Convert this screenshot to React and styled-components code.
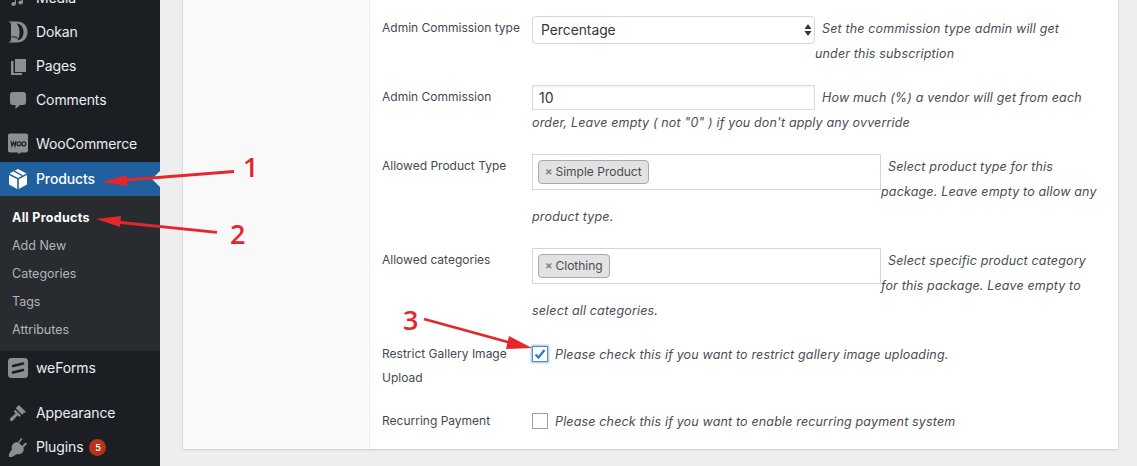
import React from 'react';
import styled, { createGlobalStyle } from 'styled-components';

const Global = createGlobalStyle`
  html, body { margin: 0; padding: 0; height: 466px; overflow: hidden; background: #eeeeee; }
  * { box-sizing: border-box; }
  #root { height: 466px; }
`;

const fontStack = `Inter, "Open Sans", "Liberation Sans", sans-serif`;

const Page = styled.div`
  position: relative;
  display: flex;
  width: 1137px;
  height: 466px;
  overflow: hidden;
  font-family: ${fontStack};
  background: #eeeeee;
`;

const Sidebar = styled.nav`
  flex: 0 0 160px;
  background: #1b1f24;
  height: 466px;
  overflow: hidden;
`;

const SidebarInner = styled.div`
  margin-top: -19px;
`;

const MenuItem = styled.div`
  display: flex;
  align-items: center;
  position: relative;
  height: 34px;
  padding-left: 8px;
  gap: 8px;
  font-size: 14px;
  letter-spacing: -0.12px;
  font-weight: ${p => (p.$active ? 500 : 400)};
  color: ${p => (p.$active ? '#ffffff' : '#eceef0')};
  background: ${p => (p.$active ? '#20609f' : 'transparent')};
  margin-top: ${p => p.$gap || 0}px;
`;

const MenuLabel = styled.span`
  margin-top: -1px;
`;

const IconSlot = styled.span`
  flex: 0 0 20px;
  width: 20px;
  height: 20px;
  display: flex;
  align-items: center;
  justify-content: center;
  color: ${p => (p.$active ? '#ffffff' : '#8b8f94')};
`;

const Notch = styled.span`
  position: absolute;
  right: 0;
  top: 50%;
  margin-top: -8px;
  border: 8px solid transparent;
  border-right-color: #eeeeee;
  border-left-width: 0;
`;

const SubMenu = styled.div`
  background: #282c30;
  padding: 7px 0 8px;
`;

const SubItem = styled.div`
  height: 28px;
  padding-left: 12px;
  display: flex;
  align-items: center;
  font-size: 12.5px;
  letter-spacing: ${p => (p.$active ? '0.3px' : '0')};
  font-weight: ${p => (p.$active ? 700 : 400)};
  color: ${p => (p.$active ? '#ffffff' : '#b3b5b8')};
`;

const Badge = styled.span`
  display: inline-flex;
  align-items: center;
  justify-content: center;
  width: 17px;
  height: 17px;
  border-radius: 50%;
  background: #b9321c;
  color: #fff;
  font-size: 9px;
  font-weight: 600;
  margin-left: -2px;
`;

const Main = styled.main`
  flex: 1;
  height: 466px;
  padding: 0 19px 17px 23px;
  display: flex;
  flex-direction: column;
  justify-content: flex-end;
`;

const Card = styled.section`
  display: flex;
  height: 480px;
  background: #ffffff;
  box-shadow: 0 1px 2px rgba(0, 0, 0, 0.12), 0 0 1px rgba(0, 0, 0, 0.18);
`;

const SideCol = styled.div`
  flex: 0 0 187px;
  background: #f9f9f9;
  border-right: 1px solid #eeeeee;
`;

const Form = styled.div`
  flex: 1;
  padding: 30px 12px 0;
  display: flex;
  flex-direction: column;
  justify-content: flex-end;
`;

const Row = styled.div`
  display: grid;
  grid-template-columns: 150px 1fr;
  height: ${p => p.$h}px;
`;

const Label = styled.div`
  font-size: 12px;
  line-height: 24px;
  color: #444a50;
`;

const Field = styled.div`
  font-size: 13px;
  line-height: 25px;
  color: #4a4d52;
  width: 566px;
`;

const Help = styled.span`
  font-style: italic;
  font-size: 12.5px;
  letter-spacing: 0.16px;
  margin-left: 7px;
`;

const SelectWrap = styled.span`
  position: relative;
  float: left;
  width: 283px;
  height: 28px;
`;

const Select = styled.select`
  appearance: none;
  display: block;
  width: 100%;
  height: 28px;
  padding: 0 8px;
  border: 1px solid #d6d6d6;
  border-radius: 4px;
  background: #fff;
  color: #33363a;
  font: 13.8px ${fontStack};
`;

const SelectArrows = styled.svg`
  position: absolute;
  right: 2px;
  top: 7px;
  pointer-events: none;
`;

const TextInput = styled.input`
  float: left;
  width: 283px;
  height: 25px;
  padding: 0 6px;
  border: 1px solid #dcdcdc;
  box-shadow: inset 0 1px 2px rgba(0, 0, 0, 0.07);
  background: #fff;
  color: #33363a;
  font: 14px ${fontStack};
`;

const TagBox = styled.span`
  float: left;
  display: flex;
  align-items: center;
  width: 349px;
  height: 36px;
  padding-left: 5px;
  border: 1px solid #d6d6d6;
  background: #fff;
`;

const Tag = styled.span`
  display: inline-flex;
  align-items: center;
  height: 24px;
  padding: 0 6px 2px 6px;
  gap: 3px;
  background: #e2e2e2;
  border: 1px solid #a9a9a9;
  border-radius: 4px;
  font-size: 12px;
  color: #4a4d52;
`;

const TagX = styled.span`
  color: #7d7f82;
  font-size: 11px;
  line-height: 1;
  font-weight: 700;
`;

const Box = styled.span`
  float: left;
  display: flex;
  align-items: center;
  justify-content: center;
  width: 16px;
  height: 16px;
  margin-top: 4px;
  border: 1px solid ${p => (p.$checked ? '#4a8fcb' : '#9aa0a6')};
  background: #fff;
  box-shadow: ${p => (p.$checked ? '0 0 2px 1px rgba(70, 140, 200, 0.55)' : 'none')};
`;

const Overlay = styled.svg`
  position: absolute;
  inset: 0;
  pointer-events: none;
`;

const Numeral = styled.span`
  position: absolute;
  left: ${p => p.$x}px;
  top: ${p => p.$y}px;
  color: #e4272c;
  font-family: "Open Sans", "Liberation Sans", sans-serif;
  font-size: 27px;
  font-weight: 600;
  line-height: 30px;
`;

const MusicIcon = () => (
  <svg width="20" height="20" viewBox="0 0 20 20"><path fill="currentColor" d="M15 2v12.2c0 1.3-1.2 2.3-2.6 2.3-1.3 0-2.2-.8-2.2-1.9 0-1.2 1.2-2.2 2.6-2.2.4 0 .8.1 1.2.2V5.5L8 7v8.7c0 1.3-1.2 2.3-2.6 2.3-1.3 0-2.2-.8-2.2-1.9 0-1.2 1.2-2.2 2.6-2.2.4 0 .8.1 1.2.2V4z" /></svg>
);
const DokanIcon = () => (
  <svg width="20" height="20" viewBox="0 0 20 20" style={{ overflow: 'visible' }}>
    <path fill="currentColor" d="M0-.5h9c6.5 0 10.5 4.300 10.500 10.500S15.500 20.500 9 20.500H0c2-.5 3-1.500 3-3.500V3C3 1 2-.1 0-.5z" />
    <path fill="#1b1f24" d="M8.500 1.500c4.500.5 7 3.500 7 8.500 0 4.500-2 7.500-6 8.500 1.500-2.500 2-5 2-8.500s-1-6.500-3-8.500z" />
    <path fill="#1b1f24" opacity=".6" d="M1 15c4-1.500 7-1 9 .5v1.500c-3-1.500-6-1.500-9-2z" />
  </svg>
);
const PagesIcon = () => (
  <svg width="20" height="20" viewBox="0 0 20 20"><path fill="currentColor" d="M7 3h11v13H7z" /><path fill="currentColor" d="M3 6h2.500v12H14v2H3z" transform="translate(0 -1)" /></svg>
);
const CommentIcon = () => (
  <svg width="20" height="20" viewBox="0 0 20 20"><path fill="currentColor" d="M5 2h10c2 0 3 1 3 3v7c0 2-1 3-3 3h-3l-4.500 4v-4H5c-2 0-3-1-3-3V5c0-2 1-3 3-3z" /></svg>
);
const WooIcon = () => (
  <svg width="20" height="20" viewBox="0 0 20 20" style={{ overflow: 'visible' }}>
    <path fill="currentColor" d="M2 0h16c1.200 0 2 .8 2 2v15c0 1.200-.8 2-2 2h-5l-2.500 1.800L10 19H2c-1.200 0-2-.8-2-2V2C0 .8.800 0 2 0z" transform="translate(0 -.5)" />
    <path fill="none" stroke="#1b1f24" strokeWidth="1.200" d="M3 7l1 5 1.500-4 1.500 4 1-5" />
    <circle cx="11" cy="9.800" r="2" fill="none" stroke="#1b1f24" strokeWidth="1.200" />
    <circle cx="15.800" cy="9.800" r="2" fill="none" stroke="#1b1f24" strokeWidth="1.200" />
  </svg>
);
const BoxIcon = () => (
  <svg width="20" height="20" viewBox="0 0 20 20" style={{ overflow: 'visible' }}>
    <path fill="currentColor" d="M10 -.5l8.500 4.500-8.500 4.500L1.500 4z" transform="translate(0 .5)" />
    <path fill="#20609f" d="M5.500 2.500l8 4.500 1.500-.8-8-4.500z" />
    <path fill="currentColor" d="M1 6l8.200 4.300V20L1 15.500zM19 6l-8.200 4.300V20l8.200-4.500z" />
  </svg>
);
const FormsIcon = () => (
  <svg width="20" height="20" viewBox="0 0 20 20">
    <rect width="20" height="20" rx="3.500" fill="currentColor" />
    <path fill="none" stroke="#1b1f24" strokeWidth="2.600" strokeLinecap="round" d="M5 8l10-2.500M5 14.500l10-2.500" />
  </svg>
);
const BrushIcon = () => (
  <svg width="20" height="20" viewBox="0 0 20 20"><path fill="currentColor" d="M11 2l7 7-1 .8-1.600-.2-.2 2-1.500-.4-6-6zM7.200 6.700l5.800 5.800-1.800 1.500-1.700-1.700-4.500 5.200c-.8.700-1.700.8-2.500 0s-.7-1.700 0-2.500l5.100-4.500-1.700-1.700z" /></svg>
);
const PlugIcon = () => (
  <svg width="20" height="20" viewBox="0 0 20 20"><path fill="currentColor" d="M13 1l1.500 1.300L11 6l3 3 3.500-3.500L19 7l-3.600 3.500c.8 2.300.3 4-1.400 5.500-1.500 1.300-3.200 1.700-5 1L4 20H1v-3l3-5c-.7-1.700-.3-3.500 1-5 1.500-1.700 3.200-2.100 5-1.500z" /></svg>
);

const Arrow = ({ points, head }) => (
  <>
    <polyline points={points} fill="none" stroke="#e4272c" strokeWidth="2.800" />
    <polygon points={head} fill="#e4272c" />
  </>
);

export default function App() {
  return (
    <Page>
      <Global />
      <Sidebar>
        <SidebarInner>
          <MenuItem><IconSlot><MusicIcon /></IconSlot><MenuLabel>Media</MenuLabel></MenuItem>
          <MenuItem><IconSlot><DokanIcon /></IconSlot><MenuLabel>Dokan</MenuLabel></MenuItem>
          <MenuItem><IconSlot><PagesIcon /></IconSlot><MenuLabel>Pages</MenuLabel></MenuItem>
          <MenuItem><IconSlot><CommentIcon /></IconSlot><MenuLabel>Comments</MenuLabel></MenuItem>
          <MenuItem $gap={10}><IconSlot><WooIcon /></IconSlot><MenuLabel>WooCommerce</MenuLabel></MenuItem>
          <MenuItem $active $gap={1}><IconSlot $active><BoxIcon /></IconSlot><MenuLabel>Products</MenuLabel><Notch /></MenuItem>
          <SubMenu>
            <SubItem $active>All Products</SubItem>
            <SubItem>Add New</SubItem>
            <SubItem>Categories</SubItem>
            <SubItem>Tags</SubItem>
            <SubItem>Attributes</SubItem>
          </SubMenu>
          <MenuItem><IconSlot><FormsIcon /></IconSlot><MenuLabel>weForms</MenuLabel></MenuItem>
          <MenuItem $gap={11}><IconSlot><BrushIcon /></IconSlot><MenuLabel>Appearance</MenuLabel></MenuItem>
          <MenuItem><IconSlot><PlugIcon /></IconSlot><MenuLabel>Plugins</MenuLabel><Badge>5</Badge></MenuItem>
        </SidebarInner>
      </Sidebar>
      <Main>
        <Card>
          <SideCol />
          <Form>
            <Row $h={69}>
              <Label>Admin Commission type</Label>
              <Field>
                <SelectWrap>
                  <Select defaultValue="p"><option value="p">Percentage</option></Select>
                  <SelectArrows width="10" height="14" viewBox="0 0 10 14">
                    <path fill="#33363a" d="M5 1l3.500 5h-7zM5 13L1.500 8h7z" />
                  </SelectArrows>
                </SelectWrap>
                <Help>Set the commission type admin will get<br />under this subscription</Help>
              </Field>
            </Row>
            <Row $h={69}>
              <Label>Admin Commission</Label>
              <Field>
                <TextInput defaultValue="10" />
                <Help>How much (%) a vendor will get from each order, Leave empty ( not "0" ) if you don't apply any ovverride</Help>
              </Field>
            </Row>
            <Row $h={94}>
              <Label>Allowed Product Type</Label>
              <Field>
                <TagBox><Tag><TagX>×</TagX>Simple Product</Tag></TagBox>
                <Help>Select product type for this package. Leave empty to allow any product type.</Help>
              </Field>
            </Row>
            <Row $h={94}>
              <Label>Allowed categories</Label>
              <Field>
                <TagBox><Tag><TagX>×</TagX>Clothing</Tag></TagBox>
                <Help>Select specific product category for this package. Leave empty to select all categories.</Help>
              </Field>
            </Row>
            <Row $h={67}>
              <Label>Restrict Gallery Image Upload</Label>
              <Field>
                <Box $checked>
                  <svg width="12" height="12" viewBox="0 0 12 12"><path fill="none" stroke="#2f7cc0" strokeWidth="2.300" d="M1.500 6.500l3 3 6-7.500" /></svg>
                </Box>
                <Help>Please check this if you want to restrict gallery image uploading.</Help>
              </Field>
            </Row>
            <Row $h={40}>
              <Label>Recurring Payment</Label>
              <Field>
                <Box />
                <Help>Please check this if you want to enable recurring payment system</Help>
              </Field>
            </Row>
          </Form>
        </Card>
      </Main>
      <Overlay width="1137" height="466" viewBox="0 0 1137 466">
        <Arrow points="234,171.500 120,180.500" head="102,182 127,175 127,186" />
        <Arrow points="217,232.300 116,222" head="96,219 121,216 120,227" />
        <Arrow points="424,319 515,344" head="532,348 506,349 509,336" />
      </Overlay>
      <Numeral $x={243} $y={152}>1</Numeral>
      <Numeral $x={230} $y={219}>2</Numeral>
      <Numeral $x={403} $y={305}>3</Numeral>
    </Page>
  );
}
